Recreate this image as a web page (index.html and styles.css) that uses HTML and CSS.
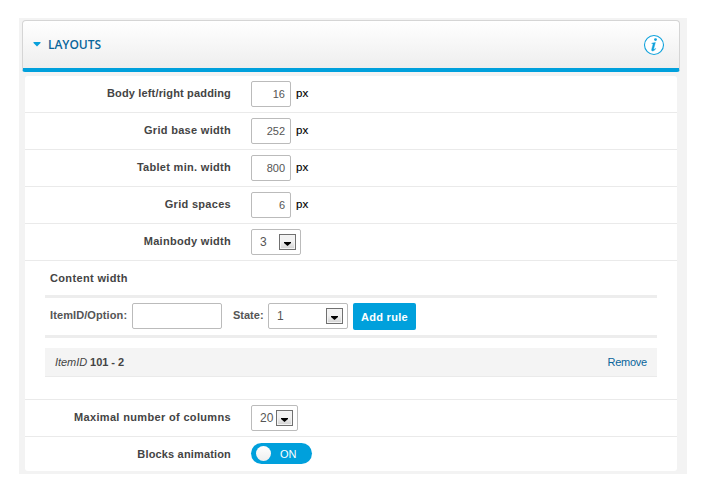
FILE: index.html
```html
<!DOCTYPE html>
<html lang="en">
<head>
<meta charset="utf-8">
<title>Layouts</title>
<link rel="stylesheet" href="styles.css">
</head>
<body>
<main class="wrap">
  <header class="head">
    <svg class="caret" width="8" height="5" viewBox="0 0 8 5"><path d="M.5 0h7v1L4 4.5.5 1z" fill="#08a0db"/></svg>
    <h1>LAYOUTS</h1>
    <svg class="info" width="22" height="22" viewBox="0 0 22 22"><circle cx="11" cy="11" r="9.5" fill="#fff" stroke="#10a2dc" stroke-width="1.1"/><path d="M8.8 9.2L12.4 8.4 10.7 14.8Q10.6 15.9 12.6 14.4L12.8 14.8Q10.8 17.2 9.3 17Q8.3 16.8 8.7 15.3L10.1 10Q10.1 9.3 8.8 9.7z" fill="#10a2dc" stroke="#10a2dc" stroke-width=".4"/><circle cx="12.5" cy="5.6" r="1.4" fill="#10a2dc"/></svg>
  </header>
  <section class="panel">
    <div class="row"><label class="tight">Body left/right padding</label><div class="box num">16</div><span class="unit">px</span></div>
    <div class="row"><label>Grid base width</label><div class="box num">252</div><span class="unit">px</span></div>
    <div class="row"><label>Tablet min. width</label><div class="box num">800</div><span class="unit">px</span></div>
    <div class="row"><label>Grid spaces</label><div class="box num">6</div><span class="unit">px</span></div>
    <div class="row"><label>Mainbody width</label><div class="box select w50">3<i class="drop"><svg width="7" height="4" viewBox="0 0 7 4"><path d="M0 0h7v1L3.5 4 0 1z"/></svg></i></div></div>
    <div class="content">
      <h2>Content width</h2>
      <div class="rule">
        <span class="cap item">ItemID/Option:</span><div class="box w90"></div>
        <span class="cap state">State:</span><div class="box select w80">1<i class="drop"><svg width="7" height="4" viewBox="0 0 7 4"><path d="M0 0h7v1L3.5 4 0 1z"/></svg></i></div>
        <button class="add">Add rule</button>
      </div>
      <div class="entry"><span class="id"><em>ItemID</em> <b>101 - 2</b></span><a>Remove</a></div>
    </div>
    <div class="row"><label class="wide">Maximal number of columns</label><div class="box select w47">20<i class="drop"><svg width="7" height="4" viewBox="0 0 7 4"><path d="M0 0h7v1L3.5 4 0 1z"/></svg></i></div></div>
    <div class="row last"><label class="tight">Blocks animation</label><div class="toggle"><i></i><span>ON</span></div></div>
  </section>
</main>
</body>
</html>
```

FILE: styles.css
```css
* { box-sizing: border-box; }
body {
  margin: 0;
  background: #fff;
  color: #444;
  font: 11px/14px "Liberation Sans", Arial, sans-serif;
  white-space: nowrap;
}
h1, h2 { margin: 0; }
.wrap {
  width: 668px;
  height: 456px;
  margin: 18px 0 0 19px;
  padding: 2px 7px 0 3px;
  background: #f3f3f3;
}
.head {
  display: flex;
  align-items: center;
  height: 52px;
  padding: 0 14px 0 10px;
  border: 1px solid #d5d5d5;
  border-bottom: 4px solid #00a0dc;
  border-radius: 4px 4px 3px 3px;
  background: linear-gradient(#fff, #eee);
}
.head h1 {
  flex: 1;
  margin-left: 7px;
  color: #09659b;
  font: 600 12px/16px "Open Sans", sans-serif;
  letter-spacing: -.05px;
}
.panel {
  width: 652px;
  height: 395px;
  margin: 4px 0 0 3px;
  border-radius: 3px;
  background: #fff;
}
.row {
  display: flex;
  align-items: center;
  height: 37px;
  border-bottom: 1px solid #eaeaea;
}
.row.last { border-bottom: 0; height: 35px; }
.row label {
  width: 206px;
  margin-right: 20px;
  text-align: right;
  font-weight: bold;
  letter-spacing: .3px;
  transform: translateY(-1px);
}
.row label.tight { letter-spacing: .16px; }
.row label.wide { letter-spacing: .34px; }
.row.last label { transform: none; margin-top: -1px; }
.box {
  flex: none;
  width: 40px;
  height: 26px;
  border: 1px solid #bbb;
  border-radius: 2px;
  background: #fff;
  color: #555;
  line-height: 25px;
}
.num { padding-right: 5px; text-align: right; }
.unit {
  margin: -2px 0 0 5px;
  color: #000;
  font-size: 11.5px;
  -webkit-text-stroke: .15px #000;
}
.select {
  display: flex;
  align-items: center;
  justify-content: space-between;
  padding: 0 4px 0 8px;
  font-size: 12px;
}
.w50 { width: 50px; }
.w47 { width: 47px; }
.w80 { width: 80px; }
.w90 { width: 90px; }
.drop {
  display: flex;
  align-items: center;
  justify-content: center;
  width: 17px;
  height: 16px;
  padding-top: 3px;
  border: 1px solid #707070;
  box-shadow: inset 0 0 0 1px #f4f4f4;
  background: linear-gradient(#f2f2f2 45%, #d2d2d2);
}
.content {
  height: 139px;
  padding: 0 20px;
  border-bottom: 1px solid #eaeaea;
}
.content h2 {
  height: 34px;
  padding-left: 5px;
  font-size: 11px;
  line-height: 34px;
  letter-spacing: .35px;
}
.rule {
  display: flex;
  align-items: flex-start;
  height: 43px;
  padding: 5px 0 0 5px;
  border: solid #ededed;
  border-width: 3px 0;
}
.cap {
  color: #555;
  font-weight: bold;
  line-height: 25px;
  letter-spacing: .1px;
}
.item { width: 82px; }
.state { width: 35px; margin-left: 11px; letter-spacing: 0; }
.add {
  width: 63px;
  height: 27px;
  margin-left: 5px;
  padding: 1px 0 0;
  border: 0;
  border-radius: 2px;
  background: #00a0dc;
  color: #fff;
  font: bold 11px/26px "Liberation Sans", Arial, sans-serif;
  letter-spacing: .3px;
}
.entry {
  display: flex;
  align-items: center;
  justify-content: space-between;
  height: 29px;
  margin-top: 10px;
  padding: 0 10px;
  border-bottom: 1px solid #eaeaea;
  background: #f4f4f4;
}
.id { letter-spacing: -.05px; }
.entry a { color: #09659b; letter-spacing: -.25px; }
.toggle {
  display: flex;
  align-items: center;
  width: 61px;
  height: 21px;
  margin-top: -2px;
  padding-left: 5px;
  border-radius: 11px;
  background: #00a0dc;
  color: #fff;
}
.toggle i {
  width: 15px;
  height: 15px;
  margin-right: 9px;
  border-radius: 50%;
  background: linear-gradient(#fff, #eee);
}
```
